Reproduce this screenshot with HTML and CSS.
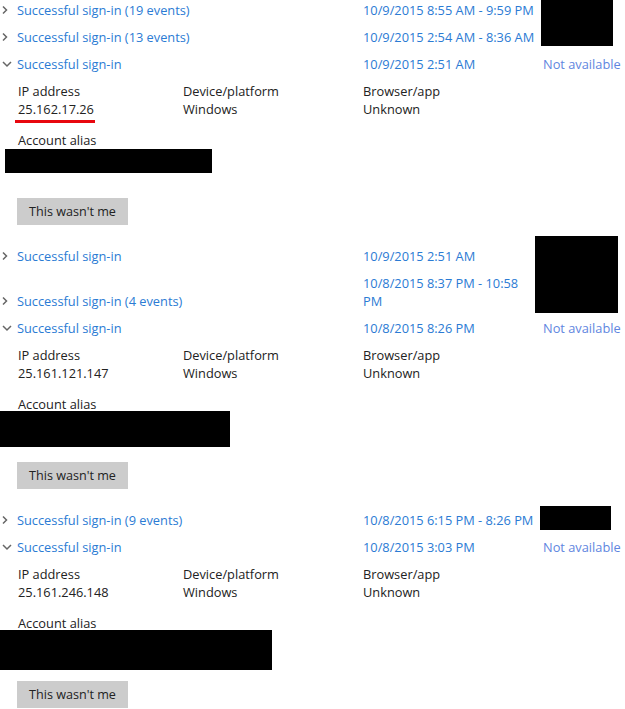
FILE: index.html
```html
<!DOCTYPE html>
<html lang="en">
<head>
  <meta charset="UTF-8">
  <title>Recent activity</title>
  <link rel="stylesheet" href="styles.css">
</head>
<body>
  <div class="activity">

    <div class="row">
      <span class="chev"><svg width="9" height="10" viewBox="0 0 9 10"><polyline points="3,1.5 6.5,5 3,8.5"/></svg></span>
      <a class="label">Successful sign-in (19 events)</a>
      <a class="date">10/9/2015 8:55 AM - 9:59 PM</a>
      <span class="status"><span class="redact" style="left:-2px;top:-1px;width:72px;height:46px"></span></span>
    </div>

    <div class="row">
      <span class="chev"><svg width="9" height="10" viewBox="0 0 9 10"><polyline points="3,1.5 6.5,5 3,8.5"/></svg></span>
      <a class="label">Successful sign-in (13 events)</a>
      <a class="date">10/9/2015 2:54 AM - 8:36 AM</a>
      <span class="status"></span>
    </div>

    <div class="row">
      <span class="chev"><svg width="12" height="10" viewBox="0 0 12 10"><polyline points="3,3 7,7 11,3"/></svg></span>
      <a class="label">Successful sign-in</a>
      <a class="date">10/9/2015 2:51 AM</a>
      <a class="status">Not available</a>
    </div>

    <div class="details">
      <div class="fields">
        <div>
          <div>IP address</div>
          <div><span class="marked">25.162.17.26</span></div>
        </div>
        <div>
          <div>Device/platform</div>
          <div>Windows</div>
        </div>
        <div>
          <div>Browser/app</div>
          <div>Unknown</div>
        </div>
      </div>
      <div class="alias">
        <div>Account alias</div>
        <span class="redact" style="left:-13px;top:18px;width:207px;height:24px"></span>
      </div>
      <button class="report">This wasn't me</button>
    </div>

    <div class="row">
      <span class="chev"><svg width="9" height="10" viewBox="0 0 9 10"><polyline points="3,1.5 6.5,5 3,8.5"/></svg></span>
      <a class="label">Successful sign-in</a>
      <a class="date">10/9/2015 2:51 AM</a>
      <span class="status"><span class="redact" style="left:-8px;top:-11px;width:83px;height:77px"></span></span>
    </div>

    <div class="row bottom">
      <span class="chev"><svg width="9" height="10" viewBox="0 0 9 10"><polyline points="3,1.5 6.5,5 3,8.5"/></svg></span>
      <a class="label">Successful sign-in (4 events)</a>
      <a class="date">10/8/2015 8:37 PM - 10:58 PM</a>
      <span class="status"></span>
    </div>

    <div class="row">
      <span class="chev"><svg width="12" height="10" viewBox="0 0 12 10"><polyline points="3,3 7,7 11,3"/></svg></span>
      <a class="label">Successful sign-in</a>
      <a class="date">10/8/2015 8:26 PM</a>
      <a class="status">Not available</a>
    </div>

    <div class="details">
      <div class="fields">
        <div>
          <div>IP address</div>
          <div>25.161.121.147</div>
        </div>
        <div>
          <div>Device/platform</div>
          <div>Windows</div>
        </div>
        <div>
          <div>Browser/app</div>
          <div>Unknown</div>
        </div>
      </div>
      <div class="alias">
        <div>Account alias</div>
        <span class="redact" style="left:-18px;top:16px;width:230px;height:36px"></span>
      </div>
      <button class="report">This wasn't me</button>
    </div>

    <div class="row">
      <span class="chev"><svg width="9" height="10" viewBox="0 0 9 10"><polyline points="3,1.5 6.5,5 3,8.5"/></svg></span>
      <a class="label">Successful sign-in (9 events)</a>
      <a class="date">10/8/2015 6:15 PM - 8:26 PM</a>
      <span class="status"><span class="redact" style="left:-3px;top:-5px;width:71px;height:24px"></span></span>
    </div>

    <div class="row">
      <span class="chev"><svg width="12" height="10" viewBox="0 0 12 10"><polyline points="3,3 7,7 11,3"/></svg></span>
      <a class="label">Successful sign-in</a>
      <a class="date">10/8/2015 3:03 PM</a>
      <a class="status">Not available</a>
    </div>

    <div class="details">
      <div class="fields">
        <div>
          <div>IP address</div>
          <div>25.161.246.148</div>
        </div>
        <div>
          <div>Device/platform</div>
          <div>Windows</div>
        </div>
        <div>
          <div>Browser/app</div>
          <div>Unknown</div>
        </div>
      </div>
      <div class="alias">
        <div>Account alias</div>
        <span class="redact" style="left:-18px;top:16px;width:272px;height:40px"></span>
      </div>
      <button class="report">This wasn't me</button>
    </div>

  </div>
</body>
</html>
```

FILE: styles.css
```css
body {
  margin: 0;
  background-color: #fff;
  font-family: 'Open Sans', 'Liberation Sans', sans-serif;
  font-size: 12.8px;
  line-height: 18px;
  color: #222;
}
.activity {
  width: 625px;
  padding-top: 1px;
}
.row {
  display: grid;
  grid-template-columns: 17px 346px 180px auto;
  align-items: start;
  padding-bottom: 9px;
}
.row.bottom .chev,
.row.bottom .label {
  align-self: end;
}
.chev {
  display: flex;
  align-items: center;
  height: 18px;
}
.chev polyline {
  fill: none;
  stroke: #666;
  stroke-width: 1.5;
}
.label,
.date {
  color: #2b7bd4;
}
.date {
  padding-right: 6px;
}
.status {
  position: relative;
  color: #5f86e0;
  white-space: nowrap;
}
.redact {
  position: absolute;
  background-color: #000;
}
.details {
  padding-left: 18px;
  padding-bottom: 22px;
}
.fields {
  display: grid;
  grid-template-columns: 165px 180px auto;
}
.marked {
  margin-left: -3px;
  padding: 0 1px 2px 3px;
  border-bottom: 3px solid #e8070f;
}
.alias {
  position: relative;
  height: 67px;
  margin-top: 13px;
}
.report {
  display: block;
  width: 111px;
  height: 27px;
  margin-left: -1px;
  padding: 0;
  border: none;
  background-color: #ccc;
  font-family: inherit;
  font-size: 12.6px;
  color: #222;
}
```
